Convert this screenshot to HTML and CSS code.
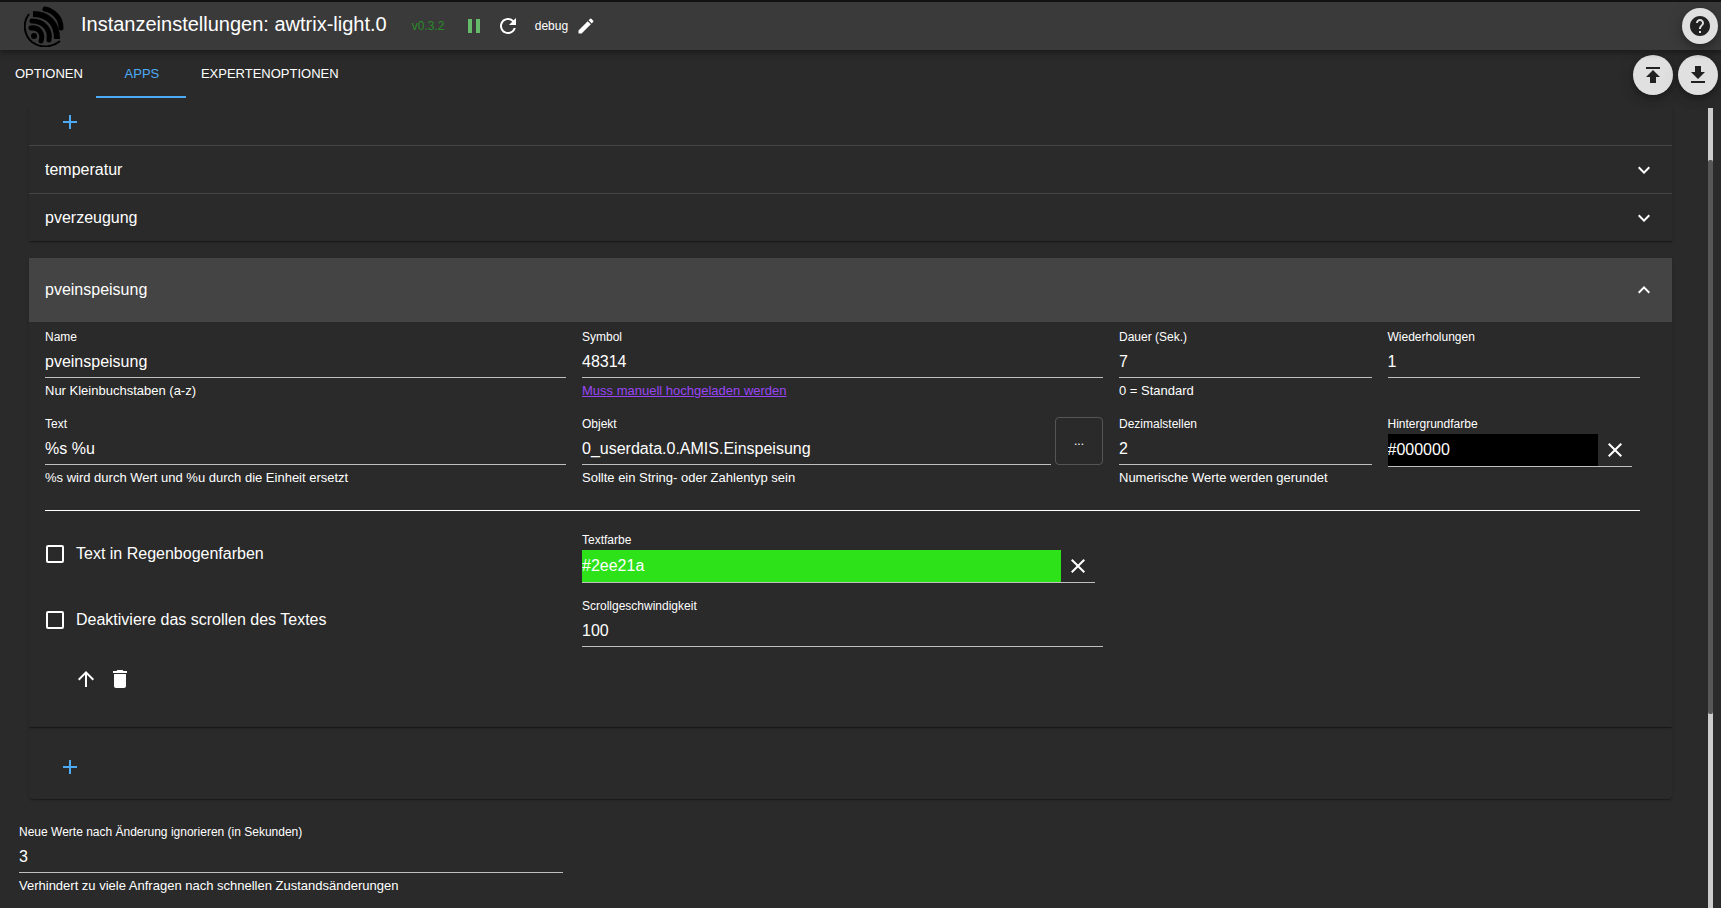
FILE: index.html
```html
<!DOCTYPE html>
<html lang="de">
<head>
<meta charset="utf-8">
<title>Instanzeinstellungen: awtrix-light.0</title>
<link rel="stylesheet" href="styles.css">
</head>
<body>
<div class="app">
  <header class="toolbar">
    <svg class="logo" viewBox="0 0 40 41" aria-hidden="true">
      <g fill="none" stroke="currentColor">
        <path stroke-width="2" d="M5 8C-2 17 0 29 8 36C17 43 29 41 36 35"/>
        <path stroke-width="5" stroke-linecap="round" d="M21 3C30 5 37 12 37 22"/>
        <path stroke-width="6" d="M9 8C24 8 33 17 33 33"/>
        <path stroke-width="5" stroke-linecap="round" d="M8 15C19 15 27 23 25 34"/>
        <path stroke-width="5" stroke-linecap="round" d="M7 22C14 21 20 27 17 35"/>
      </g>
      <circle cx="10" cy="30" r="3" fill="currentColor"/>
    </svg>
    <h1 class="title">Instanzeinstellungen: awtrix-light.0</h1>
    <span class="version">v0.3.2</span>
    <button class="icon-btn pause" aria-label="Pause"><svg viewBox="0 0 24 24"><path d="M6 19h4V5H6v14zm8-14v14h4V5h-4z"/></svg></button>
    <button class="icon-btn reload" aria-label="Neu starten"><svg viewBox="0 0 24 24"><path d="M17.65 6.35A7.958 7.958 0 0 0 12 4c-4.42 0-7.99 3.58-7.99 8s3.57 8 7.99 8c3.73 0 6.84-2.55 7.73-6h-2.08A5.99 5.99 0 0 1 12 18c-3.31 0-6-2.69-6-6s2.69-6 6-6c1.66 0 3.14.69 4.22 1.78L13 11h7V4l-2.350 2.350z"/></svg></button>
    <span class="loglevel">debug</span>
    <button class="icon-btn edit" aria-label="Bearbeiten"><svg viewBox="0 0 24 24"><path d="M3 17.250V21h3.750L17.810 9.940l-3.750-3.750L3 17.250zM20.710 7.040a.996.996 0 0 0 0-1.410l-2.340-2.340a.996.996 0 0 0-1.410 0l-1.830 1.830 3.750 3.750 1.830-1.830z"/></svg></button>
    <button class="fab fab-small" aria-label="Hilfe"><svg viewBox="0 0 24 24"><path d="M12 2C6.480 2 2 6.480 2 12s4.480 10 10 10 10-4.480 10-10S17.520 2 12 2zm1 17h-2v-2h2v2zm2.070-7.750l-.9.920C13.450 12.900 13 13.500 13 15h-2v-.5c0-1.100.45-2.100 1.170-2.830l1.240-1.260c.37-.36.590-.86.590-1.410 0-1.100-.9-2-2-2s-2 .9-2 2H8c0-2.210 1.790-4 4-4s4 1.790 4 4c0 .88-.36 1.680-.93 2.250z"/></svg></button>
  </header>

  <nav class="tabbar">
    <button class="tab">OPTIONEN</button>
    <button class="tab active">APPS</button>
    <button class="tab">EXPERTENOPTIONEN</button>
    <div class="transfer">
      <button class="fab" aria-label="Importieren"><svg viewBox="0 0 24 24"><path d="M5 4v2h14V4H5zm0 10h4v6h6v-6h4l-7-7-7 7z"/></svg></button>
      <button class="fab" aria-label="Exportieren"><svg viewBox="0 0 24 24"><path d="M19 9h-4V3H9v6H5l7 7 7-7zM5 18v2h14v-2H5z"/></svg></button>
    </div>
  </nav>

  <div class="viewport">
    <main class="content">
      <div class="panels">
        <div class="group">
          <div class="add-row add-top">
            <button class="icon-btn add" aria-label="Hinzufügen"><svg viewBox="0 0 24 24"><path d="M19 13h-6v6h-2v-6H5v-2h6V5h2v6h6v2z"/></svg></button>
          </div>
          <button class="summary"><span>temperatur</span><svg viewBox="0 0 24 24"><path d="M16.590 8.590L12 13.170 7.410 8.590 6 10l6 6 6-6z"/></svg></button>
          <button class="summary"><span>pverzeugung</span><svg viewBox="0 0 24 24"><path d="M16.590 8.590L12 13.170 7.410 8.590 6 10l6 6 6-6z"/></svg></button>
        </div>

        <section class="group open">
          <button class="summary expanded"><span>pveinspeisung</span><svg viewBox="0 0 24 24"><path d="M12 8l-6 6 1.410 1.410L12 10.830l4.590 4.580L18 14z"/></svg></button>
          <div class="details">
            <div class="grid">
              <div class="field span4">
                <label for="name">Name</label>
                <input id="name" type="text" value="pveinspeisung">
                <p class="helper">Nur Kleinbuchstaben (a-z)</p>
              </div>
              <div class="field span4">
                <label for="symbol">Symbol</label>
                <input id="symbol" type="text" value="48314">
                <p class="helper"><a href="#">Muss manuell hochgeladen werden</a></p>
              </div>
              <div class="field span2">
                <label for="dauer">Dauer (Sek.)</label>
                <input id="dauer" type="text" value="7">
                <p class="helper">0 = Standard</p>
              </div>
              <div class="field span2">
                <label for="wdh">Wiederholungen</label>
                <input id="wdh" type="text" value="1">
              </div>
              <div class="field span4">
                <label for="text">Text</label>
                <input id="text" type="text" value="%s %u">
                <p class="helper">%s wird durch Wert und %u durch die Einheit ersetzt</p>
              </div>
              <div class="object span4">
                <div class="field">
                  <label for="objekt">Objekt</label>
                  <input id="objekt" type="text" value="0_userdata.0.AMIS.Einspeisung">
                  <p class="helper">Sollte ein String- oder Zahlentyp sein</p>
                </div>
                <button class="browse">...</button>
              </div>
              <div class="field span2">
                <label for="dez">Dezimalstellen</label>
                <input id="dez" type="text" value="2">
                <p class="helper">Numerische Werte werden gerundet</p>
              </div>
              <div class="field color span2">
                <label for="bg">Hintergrundfarbe</label>
                <div class="color-line">
                  <input id="bg" class="bg-black" type="text" value="#000000">
                  <button class="icon-btn clear" aria-label="Hintergrundfarbe löschen"><svg viewBox="0 0 24 24"><path d="M19 6.410L17.590 5 12 10.590 6.410 5 5 6.410 10.590 12 5 17.590 6.410 19 12 13.410 17.590 19 19 17.590 13.410 12z"/></svg></button>
                </div>
              </div>
            </div>

            <hr class="divider">

            <div class="grid compact">
              <label class="check span4"><input type="checkbox"><span>Text in Regenbogenfarben</span></label>
              <div class="field color span4">
                <label for="fg">Textfarbe</label>
                <div class="color-line">
                  <input id="fg" class="bg-green" type="text" value="#2ee21a">
                  <button class="icon-btn clear" aria-label="Textfarbe löschen"><svg viewBox="0 0 24 24"><path d="M19 6.410L17.590 5 12 10.590 6.410 5 5 6.410 10.590 12 5 17.590 6.410 19 12 13.410 17.590 19 19 17.590 13.410 12z"/></svg></button>
                </div>
              </div>
              <label class="check span4 first"><input type="checkbox"><span>Deaktiviere das scrollen des Textes</span></label>
              <div class="field span4">
                <label for="speed">Scrollgeschwindigkeit</label>
                <input id="speed" type="text" value="100">
              </div>
            </div>

            <div class="actions">
              <button class="icon-btn" aria-label="Nach oben"><svg viewBox="0 0 24 24"><path d="M4 12l1.410 1.410L11 7.830V20h2V7.830l5.580 5.590L20 12l-8-8-8 8z"/></svg></button>
              <button class="icon-btn" aria-label="Löschen"><svg viewBox="0 0 24 24"><path d="M6 19c0 1.100.9 2 2 2h8c1.100 0 2-.9 2-2V7H6v12zM19 4h-3.500l-1-1h-5l-1 1H5v2h14V4z"/></svg></button>
            </div>
          </div>
        </section>

        <div class="group last">
          <div class="add-row add-bottom">
            <button class="icon-btn add" aria-label="Hinzufügen"><svg viewBox="0 0 24 24"><path d="M19 13h-6v6h-2v-6H5v-2h6V5h2v6h6v2z"/></svg></button>
          </div>
        </div>
      </div>

      <div class="footer-grid">
        <div class="field">
          <label for="ignore">Neue Werte nach Änderung ignorieren (in Sekunden)</label>
          <input id="ignore" type="text" value="3">
          <p class="helper">Verhindert zu viele Anfragen nach schnellen Zustandsänderungen</p>
        </div>
      </div>
    </main>
    <div class="scrollbar" aria-hidden="true"><div class="thumb"></div></div>
  </div>
</div>
</body>
</html>
```
FILE: styles.css
```css
* { box-sizing: border-box; }

body {
  margin: 0;
  background: #2a2a2a;
  color: #fff;
  font-family: "Liberation Sans", Arial, sans-serif;
  font-size: 16px;
  line-height: 24px;
}

button, input { font: inherit; color: inherit; }

button {
  border: 0;
  padding: 0;
  background: none;
  cursor: pointer;
}

svg { display: block; fill: currentColor; }

.app {
  display: flex;
  flex-direction: column;
  height: 100vh;
  border-top: 2px solid #121212;
  overflow: hidden;
}

/* Toolbar */
.toolbar {
  display: flex;
  flex: none;
  align-items: center;
  height: 48px;
  padding: 0 3px 0 24px;
  background: #3a3a3a;
  box-shadow: 0 2px 4px -1px rgba(0, 0, 0, .2), 0 4px 5px rgba(0, 0, 0, .14), 0 1px 10px rgba(0, 0, 0, .12);
  position: relative;
  z-index: 1;
}

.logo { width: 40px; height: 41px; color: #000; fill: none; }
.title { margin: 0 25px 4px 17px; font-size: 20px; font-weight: 400; }
.version { width: 34px; font-size: 12px; color: #2a8a2a; }
.loglevel { width: 34px; margin-left: 15px; font-size: 12px; }

.icon-btn {
  display: flex;
  align-items: center;
  justify-content: center;
  flex: none;
}
.icon-btn svg { width: 24px; height: 24px; }
.pause { margin-left: 16px; color: #66bb6a; }
.reload { margin-left: 10px; }
.edit { margin-left: 7px; }
.edit svg { width: 20px; height: 20px; }

.fab {
  display: flex;
  align-items: center;
  justify-content: center;
  width: 40px;
  height: 40px;
  border-radius: 50%;
  background: #e0e0e0;
  color: #212121;
  box-shadow: 0 3px 5px -1px rgba(0, 0, 0, .2), 0 6px 10px rgba(0, 0, 0, .14), 0 1px 18px rgba(0, 0, 0, .12);
}
.fab svg { width: 24px; height: 24px; }
.fab-small { width: 36px; height: 36px; margin-left: auto; }

/* Tabs */
.tabbar {
  display: flex;
  flex: none;
  height: 48px;
  padding-right: 3px;
}
.tab {
  min-width: 90px;
  padding: 2px 13px 0 15px;
  border-bottom: 2px solid transparent;
  font-size: 13px;
}
.tab.active { color: #4dabf5; border-color: #4dabf5; }
.transfer { display: flex; gap: 5px; margin-left: auto; padding-top: 5px; }

/* Scroll area */
.viewport {
  display: flex;
  flex: 1;
  min-height: 0;
  margin-top: 10px;
  padding-right: 8px;
}
.content { flex: 1; min-width: 0; overflow: hidden; }
.scrollbar { width: 5px; background: #ccc; padding-top: 52px; }
.thumb { height: 74%; background: #575757; border-radius: 2px; }

/* Accordion */
.panels { margin: 0 36px 0 29px; }
.group {
  box-shadow: 0 2px 1px -1px rgba(0, 0, 0, .2), 0 1px 1px rgba(0, 0, 0, .14), 0 1px 3px rgba(0, 0, 0, .12);
}
.open { margin-top: 17px; }
.last { border-radius: 0 0 4px 4px; margin-top: 1px; }
.add-row { display: flex; align-items: center; padding-left: 29px; }
.add { color: #4dabf5; }
.add-top { height: 37px; padding-bottom: 9px; }
.add-bottom { height: 71px; padding-top: 6px; }

.summary {
  display: flex;
  align-items: center;
  justify-content: space-between;
  width: 100%;
  height: 48px;
  padding: 0 16px;
  border-top: 1px solid #444;
  text-align: left;
}
.summary svg { width: 24px; height: 24px; }
.summary.expanded { height: 64px; background: #444; border-top: 0; }

.details { padding: 7px 32px 28px 16px; }

.grid {
  display: grid;
  grid-template-columns: repeat(12, 1fr);
  column-gap: 16px;
  row-gap: 16px;
}
.grid.compact { row-gap: 15px; }
.span4 { grid-column-end: span 4; }
.span2 { grid-column-end: span 2; }
.first { grid-column-start: 1; }

.field { min-width: 0; }
.field label { display: block; font-size: 12px; line-height: 16px; }
.field input {
  display: block;
  width: 100%;
  height: 33px;
  padding: 2px 0 0;
  border: 0;
  border-bottom: 1px solid #bfbfbf;
  border-radius: 0;
  background: transparent;
  outline: 0;
}
.helper { margin: 3px 0 0; font-size: 13px; line-height: 19px; white-space: nowrap; }
.helper a { color: #9a45f5; }

.object { display: flex; align-items: flex-start; gap: 4px; }
.object .field { flex: 1; }
.browse {
  width: 48px;
  height: 48px;
  margin-top: 1px;
  border: 1px solid #555;
  border-radius: 4px;
  font-size: 12px;
}

.color-line {
  display: flex;
  height: 33px;
  margin: 2px 8px 0 0;
  border-bottom: 1px solid #bfbfbf;
}
.color-line input { flex: 1; min-width: 0; height: 32px; padding: 0; border: 0; }
.color-line .bg-black { background: #000; }
.color-line .bg-green { background: #2ee21a; }
.clear { width: 34px; }

.divider { height: 1px; margin: 23px 0 21px; border: 0; background: #fff; }

.check { display: flex; align-items: center; gap: 12px; height: 44px; }
.check input {
  appearance: none;
  width: 18px;
  height: 18px;
  margin: 0 0 0 1px;
  border: 2px solid #fff;
  border-radius: 2px;
}

.actions { display: flex; align-items: center; gap: 10px; height: 40px; margin-top: 12px; padding-left: 29px; }

.footer-grid {
  display: grid;
  grid-template-columns: repeat(3, 1fr);
  column-gap: 16px;
  padding: 25px 25px 0 19px;
}
```
